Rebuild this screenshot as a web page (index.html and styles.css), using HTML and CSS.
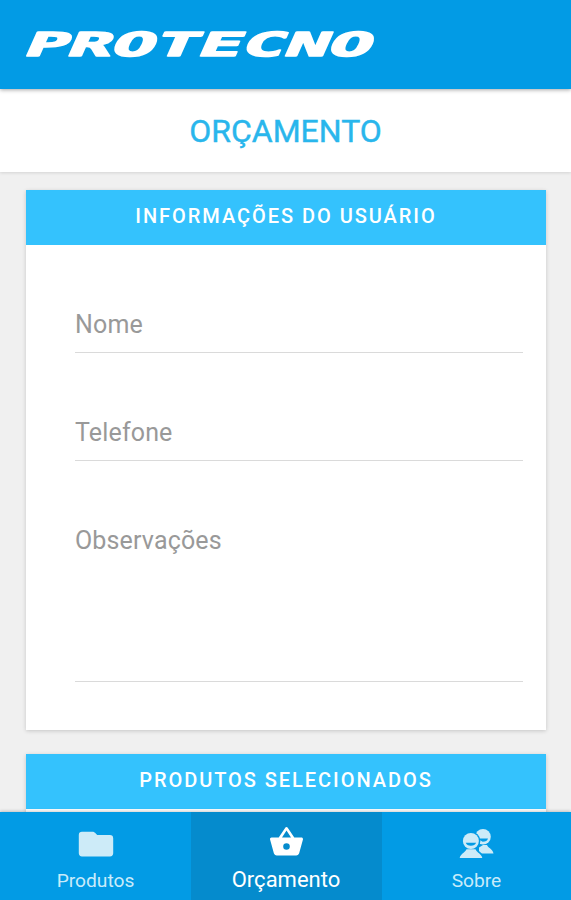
FILE: index.html
```html
<!DOCTYPE html>
<html lang="pt-br">
<head>
    <meta charset="UTF-8">
    <meta name="viewport" content="width=device-width, initial-scale=1.0">
    <title>Protecno - Orçamento</title>
    <link rel="stylesheet" href="styles.css">
</head>
<body>
<div class="app">
    <header class="topo">
        <svg class="logo" width="352" height="34" viewBox="0 0 352 34" role="img" aria-label="Protecno">
            <text class="logo-texto" transform="translate(-2 28.700) skewX(-24)" x="0" y="0" textLength="347" lengthAdjust="spacingAndGlyphs">PROTECNO</text>
        </svg>
    </header>

    <div class="titulo"><h1>ORÇAMENTO</h1></div>

    <main class="conteudo">
        <section class="card">
            <h2 class="card-titulo">INFORMAÇÕES DO USUÁRIO</h2>
            <form class="formulario">
                <input class="campo" type="text" placeholder="Nome">
                <input class="campo" type="tel" placeholder="Telefone">
                <textarea class="campo campo-obs" placeholder="Observações"></textarea>
            </form>
        </section>

        <section class="card">
            <h2 class="card-titulo">PRODUTOS SELECIONADOS</h2>
            <div class="lista"></div>
        </section>
    </main>

    <nav class="menu">
        <a class="aba" href="#">
            <svg class="icone" width="36" height="36" viewBox="0 0 36 36">
                <path d="M4 5.700h10.500c1.200 0 2 .6 2.800 1.400l1.900 2H32c2 0 3.200 1.200 3.200 3.200v15c0 2-1.200 3.200-3.200 3.200H4c-2 0-3.200-1.200-3.200-3.200V8.900C.8 6.900 2 5.700 4 5.700z"/>
            </svg>
            <span>Produtos</span>
        </a>
        <a class="aba ativa" href="#">
            <svg class="icone" width="37" height="36" viewBox="0 0 24 24">
                <path fill-rule="evenodd" d="M17.200 9L12.830 2.440a1 1 0 0 0-1.660 0L6.800 9H2c-.6 0-1 .5-1 1l.04.270 2.540 9.270c.23.840 1 1.460 1.920 1.460h13c.92 0 1.690-.62 1.930-1.460l2.540-9.270L23 10c0-.6-.5-1-1-1zM9 9l3-4.600L15 9zm3 8.200a2.200 2.200 0 1 1 0-4.400 2.200 2.200 0 0 1 0 4.400z"/>
            </svg>
            <span>Orçamento</span>
        </a>
        <a class="aba" href="#">
            <svg class="icone" width="36" height="36" viewBox="0 0 36 36">
                <!-- pessoa de trás -->
                <circle cx="24" cy="10.800" r="7.800"/>
                <path d="M20 27.500v-6l4-2.500h4c1 3 5.500 3.500 6.500 8.500z"/>
                <path class="boca" d="M18 12.500h11c-.6 2.400-2.500 3.300-5.300 3.300z"/>
                <!-- pessoa da frente -->
                <circle class="contorno" cx="11.900" cy="15" r="8"/>
                <path class="contorno" d="M.7 32c.9-4.500 4-6 7.300-8h8c3 2 6.200 3.500 7.300 8z"/>
                <circle cx="11.900" cy="15" r="8"/>
                <path d="M.7 32c.9-4.500 4.500-4.500 6.800-8.800h9c2 4.300 6 4.300 6.800 8.800z"/>
                <path class="boca" d="M6.700 16.800h10.400c-.7 2-2.600 3-5.200 3s-4.500-1-5.200-3z"/>
            </svg>
            <span>Sobre</span>
        </a>
    </nav>
</div>
</body>
</html>
```

FILE: styles.css
```css
* {
    margin: 0;
    padding: 0;
    box-sizing: border-box;
}

body {
    font-family: Roboto, "Liberation Sans", sans-serif;
    background-color: #f0f0f0;
}

.app {
    display: flex;
    flex-direction: column;
    height: 100vh;
    overflow: hidden;
}

.topo {
    flex: none;
    height: 89px;
    padding: 27px 0 0 24px;
    background-color: #029be5;
    box-shadow: 0 1px 4px rgba(0, 0, 0, 0.35);
    z-index: 2;
}

.logo {
    display: block;
    overflow: visible;
}

.logo-texto {
    font-family: "DejaVu Sans Mono", monospace;
    font-size: 33px;
    font-weight: 700;
    fill: #fff;
    stroke: #fff;
    stroke-width: 1.6;
    stroke-linejoin: round;
}

.titulo {
    flex: none;
    height: 83px;
    padding-top: 23px;
    background-color: #fff;
    text-align: center;
    box-shadow: 0 1px 3px rgba(0, 0, 0, 0.12);
    z-index: 1;
}

.titulo h1 {
    font-size: 32px;
    line-height: 38px;
    font-weight: 400;
    -webkit-text-stroke: 0.4px #29b6ec;
    color: #29b6ec;
}

.conteudo {
    flex: 1;
    min-height: 0;
    overflow: hidden;
    padding: 18px 25px 0 26px;
}

.card {
    margin-bottom: 24px;
    background-color: #fff;
    box-shadow: 0 1px 4px rgba(0, 0, 0, 0.18);
}

.card-titulo {
    height: 55px;
    background-color: #34c2fd;
    color: #fff;
    font-size: 20px;
    line-height: 52px;
    font-weight: 500;
    letter-spacing: 1.95px;
    text-align: center;
}

.formulario {
    display: flex;
    flex-direction: column;
    gap: 52px;
    height: 485px;
    padding: 52px 23px 0 49px;
}

.campo {
    display: block;
    width: 100%;
    height: 56px;
    border: none;
    border-bottom: 1px solid #dadada;
    background: none;
    font-family: inherit;
    font-size: 25px;
    line-height: 30px;
    letter-spacing: 0.15px;
    resize: none;
    outline: none;
}

.campo::placeholder {
    color: #999;
    opacity: 1;
}

.campo-obs {
    height: 169px;
    padding-top: 13px;
}

.lista {
    height: 200px;
}

.menu {
    flex: none;
    display: grid;
    grid-template-columns: 191px 191px 189px;
    height: 88px;
    background-color: #029be5;
    box-shadow: 0 -1px 3px rgba(0, 0, 0, 0.2);
    z-index: 1;
}

.aba {
    display: flex;
    flex-direction: column;
    align-items: center;
    color: #c9ebfa;
    font-size: 19.2px;
    line-height: 26px;
    text-decoration: none;
}

.icone {
    flex: none;
    height: 36px;
    margin: 14px 0 6px;
    fill: #cdebf8;
}

.ativa {
    padding-right: 1px;
    background-color: #058bcd;
    color: #fff;
    font-size: 22px;
}

.ativa .icone {
    margin: 12px 0 7px;
    fill: #fff;
}

.boca {
    fill: #029be5;
}

.contorno {
    fill: #029be5;
    stroke: #029be5;
    stroke-width: 3;
}
```
